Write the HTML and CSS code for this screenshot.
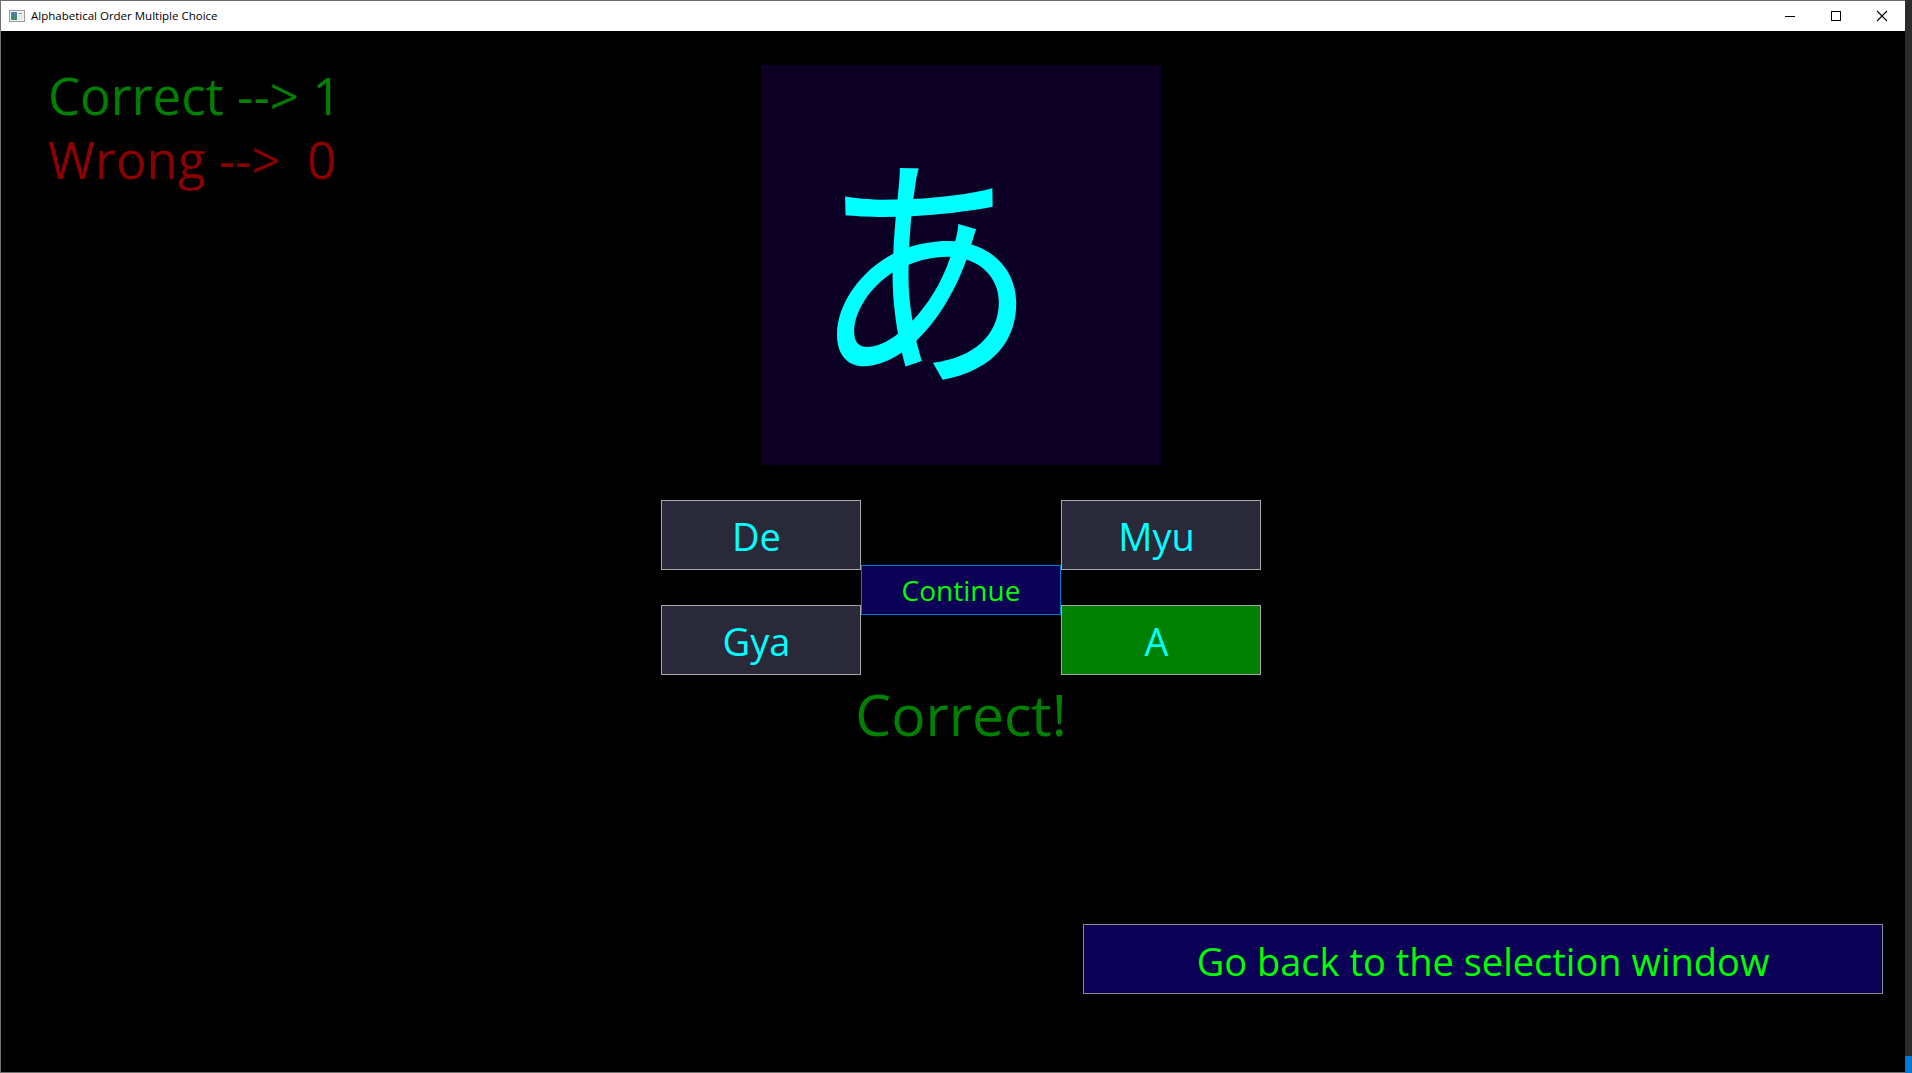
FILE: index.html
```html
<!DOCTYPE html>
<html lang="en">
<head>
<meta charset="utf-8">
<title>Alphabetical Order Multiple Choice</title>
<link rel="stylesheet" href="styles.css">
</head>
<body>
<div class="window">
  <div class="titlebar">
    <svg class="app-icon" width="16" height="12" viewBox="0 0 16 12">
      <rect x="0.5" y="0.5" width="15" height="11" fill="#f4f4f4" stroke="#9a9a9a"/>
      <rect x="2" y="2" width="6" height="8" fill="#3d8a7a"/>
      <rect x="2" y="2" width="6" height="3" fill="#4a7fb0"/>
      <rect x="9" y="2" width="5" height="8" fill="#e8e8e8"/>
      <rect x="10" y="3" width="3" height="1" fill="#9a9a9a"/>
    </svg>
    <span class="title">Alphabetical Order Multiple Choice</span>
    <div class="controls">
      <svg width="46" height="30" viewBox="0 0 46 30"><line x1="18" y1="15.5" x2="28" y2="15.5" stroke="#000" stroke-width="1"/></svg>
      <svg width="46" height="30" viewBox="0 0 46 30"><rect x="18.5" y="10.5" width="9" height="9" fill="none" stroke="#000" stroke-width="1"/></svg>
      <svg width="46" height="30" viewBox="0 0 46 30"><path d="M18 10 L28 20 M28 10 L18 20" stroke="#000" stroke-width="1.1" fill="none"/></svg>
    </div>
  </div>
  <div class="content">
    <div class="top-row">
      <div class="scores">
        <div class="score correct">Correct --&gt; 1</div>
        <div class="score wrong">Wrong --&gt;  0</div>
      </div>
      <div class="center">
        <div class="card"><span class="kana">あ</span></div>
        <div class="choices">
          <div class="choice c1">De</div>
          <div class="continue">Continue</div>
          <div class="choice c3">Myu</div>
          <div class="choice c1 r2">Gya</div>
          <div class="choice c3 r2 right">A</div>
        </div>
        <div class="result">Correct!</div>
      </div>
    </div>
    <div class="back-row">
      <div class="back">Go back to the selection window</div>
    </div>
  </div>
</div>
<div class="edge"><div class="edge-blue"></div></div>
</body>
</html>
```
FILE: styles.css
```css
html, body {
  margin: 0;
  padding: 0;
  width: 1912px;
  height: 1073px;
  overflow: hidden;
  background: #2b2b2b;
  font-family: "Open Sans", "Noto Sans", sans-serif;
}
body {
  display: flex;
}
.window {
  width: 1905px;
  height: 1073px;
  box-sizing: border-box;
  border-left: 1px solid #707070;
  border-bottom: 1px solid #707070;
  display: flex;
  flex-direction: column;
}
.titlebar {
  height: 31px;
  box-sizing: border-box;
  background: #ffffff;
  border-top: 1px solid #6b6b6b;
  display: flex;
  align-items: center;
  padding-left: 8px;
}
.app-icon {
  display: block;
  margin-top: -1px;
}
.title {
  margin-left: 6px;
  font-size: 11.5px;
  color: #000;
  font-family: "Open Sans", sans-serif;
  line-height: 14px;
  margin-top: -1px;
}
.controls {
  margin-left: auto;
  display: flex;
}
.controls svg {
  display: block;
}
.content {
  flex: 1;
  background: #000;
  display: flex;
  flex-direction: column;
}
.top-row {
  display: flex;
  align-items: flex-start;
}
.scores {
  width: 660px;
  box-sizing: border-box;
  padding-left: 47px;
  padding-top: 32px;
}
.score {
  font-size: 51px;
  line-height: 64px;
  white-space: pre;
}
.correct { color: #008000; }
.wrong { color: #8b0000; }
.center {
  width: 600px;
  margin-top: 34px;
  display: flex;
  flex-direction: column;
  align-items: center;
}
.card {
  width: 400px;
  height: 400px;
  box-sizing: border-box;
  padding-right: 72px;
  padding-bottom: 14px;
  background: #0c0124;
  display: flex;
  align-items: center;
  justify-content: center;
}
.kana {
  font-family: "Noto Sans CJK JP", sans-serif;
  font-size: 250px;
  line-height: 1;
  color: #00ffff;
  transform: scaleX(0.9);
}
.choices {
  margin-top: 35px;
  display: grid;
  grid-template-columns: repeat(3, 200px);
  grid-template-rows: 70px 70px;
  row-gap: 35px;
}
.choice {
  box-sizing: border-box;
  background: #292939;
  border: 1px solid #a8a8a8;
  color: #00ffff;
  font-size: 38px;
  display: flex;
  align-items: center;
  justify-content: center;
  padding-top: 2px;
  padding-right: 9px;
  grid-row: 1;
}
.c1 { grid-column: 1; }
.c3 { grid-column: 3; }
.r2 { grid-row: 2; }
.right { background: #008000; }
.continue {
  grid-column: 2;
  grid-row: 1 / 3;
  align-self: center;
  height: 50px;
  margin-top: 5px;
  box-sizing: border-box;
  background: #0a0055;
  border: 1px solid #0078d7;
  color: #00ff00;
  font-size: 28px;
  display: flex;
  align-items: center;
  justify-content: center;
}
.result {
  font-size: 57px;
  line-height: 78px;
  color: #008000;
  text-align: center;
}
.back-row {
  display: flex;
  justify-content: flex-end;
  padding-right: 22px;
  margin-top: 171px;
}
.back {
  width: 800px;
  height: 70px;
  box-sizing: border-box;
  background: #0a0055;
  border: 1px solid #8a8a8a;
  color: #00ff00;
  font-size: 38px;
  display: flex;
  align-items: center;
  justify-content: center;
  padding-top: 3px;
}
.edge {
  width: 7px;
  height: 1073px;
  background: #2b2b2b;
  display: flex;
  flex-direction: column;
  justify-content: flex-end;
}
.edge-blue {
  height: 17px;
  background: #0078d7;
}
```
